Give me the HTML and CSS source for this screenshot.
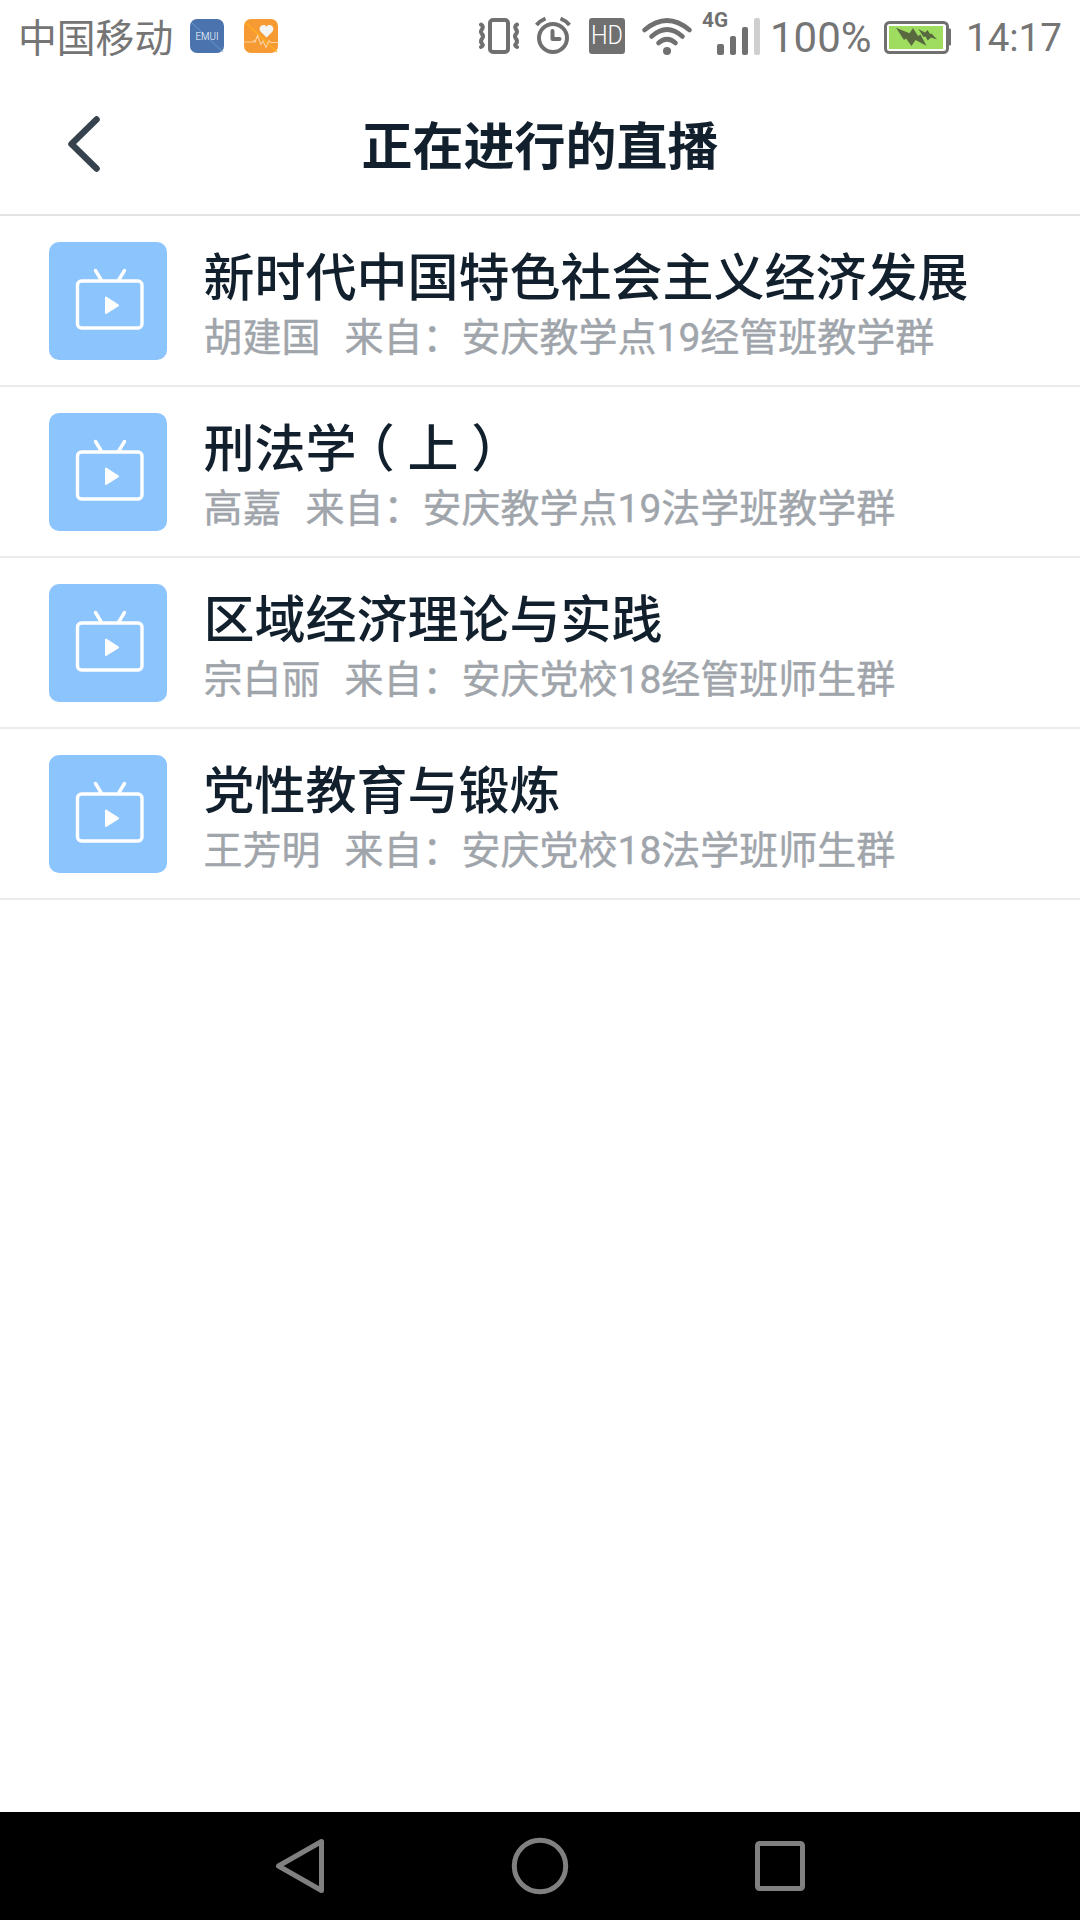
FILE: index.html
```
<!DOCTYPE html>
<html lang="zh-CN">
<head>
<meta charset="utf-8">
<meta name="viewport" content="width=device-width, initial-scale=1">
<title>正在进行的直播</title>
<link rel="stylesheet" href="styles.css">
</head>
<body>

<svg class="defs">
  <symbol id="tv" viewBox="0 0 118 118">
    <g fill="none" stroke="#fff" stroke-width="3.4" stroke-linecap="round">
      <rect x="28.500" y="39" width="64.500" height="47" rx="4"/>
      <path d="M46.500 28.500l5.500 9M75.500 28.500l-5.500 9"/>
    </g>
    <path d="M57 55.500v15.500l12-7.700z" fill="#fff" stroke="#fff" stroke-width="2" stroke-linejoin="round"/>
  </symbol>
</svg>

<div class="statusbar">
  <span class="carrier">中国移动</span>
  <svg class="app" width="34" height="34" viewBox="0 0 34 34">
    <rect width="34" height="34" rx="7" fill="#4b74ae"/>
    <path d="M1 3l32 30" stroke="#68a4cf" stroke-width=".8"/>
    <text class="emui" x="17" y="20.500" textLength="23" lengthAdjust="spacingAndGlyphs" text-anchor="middle">EMUI</text>
  </svg>
  <svg class="app" width="34" height="34" viewBox="0 0 34 34">
    <rect width="34" height="34" rx="7" fill="#f69b34"/>
    <path d="M1 3l32 30" stroke="#ffb01c" stroke-width="1.200"/>
    <path d="M22.500 18.500l-6-6c-3-4 2.500-9 6-4.800 3.500-4.200 9 .8 6 4.800z" fill="#f3f5f5"/>
    <path d="M0 23h9l1-1.500 1 1.500 2.500-6.500 3.500 9 2-3.500 3 6.500 3-7 1.500 2h8" fill="none" stroke="#fbd3a0" stroke-width="1.100"/>
  </svg>

  <div class="indicators">
    <svg width="291" height="60" viewBox="0 0 291 60" fill="none" stroke="#707070">
      <!-- vibrate -->
      <rect x="12" y="20" width="18" height="32" rx="3" stroke-width="4"/>
      <path d="M3 24.500q3 2 1 4.700t0 4.800 0 4.800 0 4.800-1 3.400M39 24.500q-3 2-1 4.700t0 4.800 0 4.800 0 4.800 1 3.400" stroke-width="4" stroke-linecap="round"/>
      <!-- alarm -->
      <circle cx="75" cy="38" r="14" stroke-width="4"/>
      <path d="M74.500 31v8h7" stroke-width="4" stroke-linecap="round" stroke-linejoin="round"/>
      <path d="M58.500 25q4-4.500 9-6.500M91.500 25q-4-4.500-9-6.500" stroke-width="4"/>
      <!-- hd -->
      <rect x="111" y="18" width="36" height="36" rx="3" fill="#707070" stroke="none"/>
      <text class="hd" x="129" y="44" text-anchor="middle" textLength="32" lengthAdjust="spacingAndGlyphs">HD</text>
      <!-- wifi -->
      <g stroke-width="4.600" stroke-linecap="round">
        <path d="M166.500 30q22.500-19 45 0M173.500 36.500q15.500-14 31 0M180.500 43q8.500-7.500 17 0"/>
      </g>
      <circle cx="189" cy="51" r="4" fill="#707070" stroke="none"/>
      <!-- signal -->
      <text class="net" x="224" y="26.500" textLength="26" lengthAdjust="spacingAndGlyphs">4G</text>
      <g stroke="none" fill="#707070">
        <rect x="239" y="44" width="7" height="11" rx="2"/>
        <rect x="252" y="36" width="6" height="19" rx="2"/>
        <rect x="264" y="27" width="6" height="28" rx="2"/>
        <rect x="276" y="18" width="6" height="37" rx="2" fill="#cfcfcf"/>
      </g>
    </svg>
    <span class="percent">100%</span>
    <svg class="battery" width="68" height="34" viewBox="0 0 68 34">
      <rect x="1.500" y="2.500" width="62" height="30" rx="4" fill="#fff" stroke="#707070" stroke-width="3"/>
      <rect x="5" y="6" width="54" height="23" fill="#9fdd60"/>
      <path d="M64 8.500h2q1 0 1 1.500v14.500q0 1-1 1h-2z" fill="#707070"/>
      <path d="M12 7.700L25.500 13.300 29 8l5 8 2.500-1.500 6 11.200-11-5.700-4 6-5.500-7.500-2 1.500zM34.300 9L41 12.500l2.500-2.500 2.500 4 1.500-.5 5.500 6-6-2-3.300 3-2.200-4-2 .5z" fill="#58693f"/>
    </svg>
    <span class="clock">14:17</span>
  </div>
</div>

<div class="header">
  <svg class="back" width="36" height="60" viewBox="0 0 36 60">
    <path d="M29.500 5.500L4.500 30l25 24.500" fill="none" stroke="#36434f" stroke-width="6.500" stroke-linecap="round" stroke-linejoin="round"/>
  </svg>
  <h1>正在进行的直播</h1>
</div>

<div class="list">
  <div class="row">
    <svg class="thumb"><use href="#tv"/></svg>
    <div class="info">
      <div class="title">新时代中国特色社会主义经济发展</div>
      <div class="sub"><span class="name">胡建国</span>来自：安庆教学点19经管班教学群</div>
    </div>
  </div>
  <div class="row">
    <svg class="thumb"><use href="#tv"/></svg>
    <div class="info">
      <div class="title">刑法学<span class="paren">（</span>上<span class="paren">）</span></div>
      <div class="sub"><span class="name">高嘉</span>来自：安庆教学点19法学班教学群</div>
    </div>
  </div>
  <div class="row">
    <svg class="thumb"><use href="#tv"/></svg>
    <div class="info">
      <div class="title">区域经济理论与实践</div>
      <div class="sub"><span class="name">宗白丽</span>来自：安庆党校18经管班师生群</div>
    </div>
  </div>
  <div class="row">
    <svg class="thumb"><use href="#tv"/></svg>
    <div class="info">
      <div class="title">党性教育与锻炼</div>
      <div class="sub"><span class="name">王芳明</span>来自：安庆党校18法学班师生群</div>
    </div>
  </div>
</div>

<div class="navbar">
  <svg width="60" height="60" viewBox="0 0 60 60"><path d="M51.500 5.500v49L8.500 30z"/></svg>
  <svg width="60" height="60" viewBox="0 0 60 60"><circle cx="30" cy="30" r="25.700"/></svg>
  <svg width="60" height="60" viewBox="0 0 60 60"><rect x="7.500" y="7.500" width="45" height="45" rx="2"/></svg>
</div>

</body>
</html>
```
FILE: styles.css
```
* {
  box-sizing: border-box;
}

body {
  margin: 0;
  height: 1920px;
  display: flex;
  flex-direction: column;
  background: #fff;
  font-family: Roboto, "Noto Sans CJK SC", sans-serif;
  color: #12202d;
}

.defs {
  display: none;
}

.statusbar {
  height: 72px;
  display: flex;
  align-items: center;
  padding: 0 18px;
  color: #757575;
}

.carrier {
  width: 172px;
  padding-top: 6px;
  font-size: 38.8px;
  line-height: 60px;
  white-space: nowrap;
}

.app {
  margin-right: 20px;
}

.emui {
  font: 300 10px Roboto, sans-serif;
  fill: #fff;
}

.indicators {
  margin-left: auto;
  height: 72px;
  display: flex;
  align-items: flex-start;
}

.hd {
  font: 300 25px Roboto, sans-serif;
  fill: #fff;
  stroke: none;
}

.net {
  font: bold 20px Roboto, sans-serif;
  fill: #707070;
  stroke: none;
}

.percent {
  width: 115px;
  margin-top: 8px;
  padding-left: 1px;
  font-size: 42px;
  line-height: 60px;
}

.battery {
  margin-top: 20px;
}

.clock {
  width: 96px;
  margin: 8px 0 0 14px;
  font-size: 38.5px;
  line-height: 60px;
}

.header {
  height: 144px;
  display: flex;
  align-items: center;
  padding: 2px 66px 0 67px;
  border-bottom: 2px solid #e3e3e3;
}

h1 {
  flex: 1;
  margin: 0 37px 0 0;
  padding-top: 8px;
  font-size: 51px;
  font-weight: bold;
  line-height: 60px;
  text-align: center;
}

.row {
  height: 171px;
  display: flex;
  align-items: center;
  padding-left: 48.5px;
  border-bottom: 2px solid #ebebeb;
}

.thumb {
  width: 118px;
  height: 118px;
  margin-right: 37px;
  border-radius: 10px;
  background: #8cc4fd;
}

.info {
  padding-top: 10px;
}

.title {
  height: 64px;
  font-size: 51px;
  font-weight: 500;
  line-height: 64px;
}

.paren {
  display: inline-block;
  width: 51px;
  text-align: center;
  font-feature-settings: "halt";
}

.sub {
  height: 54px;
  font-size: 39px;
  line-height: 54px;
  color: #a0a5ab;
  -webkit-text-stroke: 0.4px #a0a5ab;
}

.name {
  margin-right: 24px;
}

.navbar {
  height: 108px;
  margin-top: auto;
  display: flex;
  justify-content: center;
  gap: 180px;
  align-items: center;
  background: #000;
}

.navbar svg {
  fill: none;
  stroke: #808080;
  stroke-width: 5;
  stroke-linejoin: round;
}
```
